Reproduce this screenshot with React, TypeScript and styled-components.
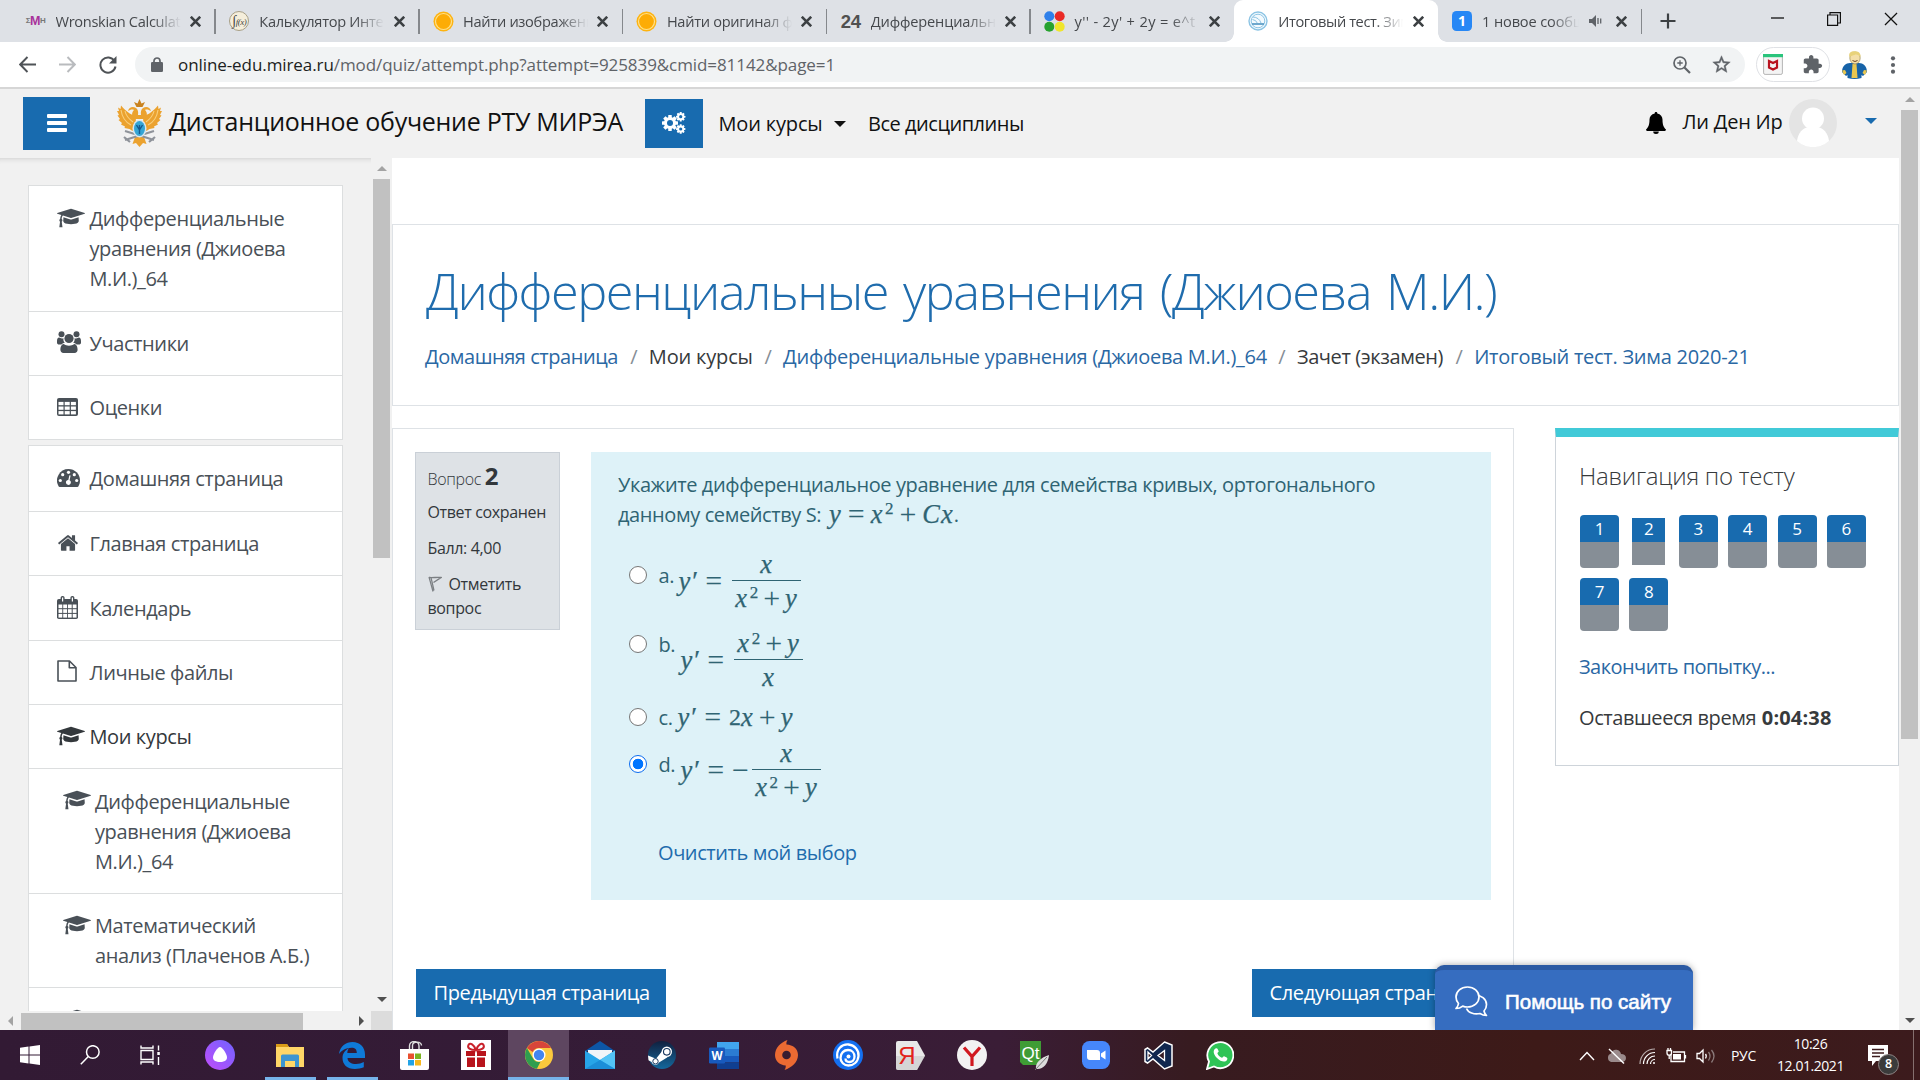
import React from "react";
import styled, { createGlobalStyle, css } from "styled-components";

const Global = createGlobalStyle`
  * { box-sizing: border-box; }
  html, body { margin: 0; padding: 0; overflow: hidden; }
  body { font-family: "Open Sans", "Noto Sans", sans-serif; color: #373a3c; background: #fff; }
  h1, h2, p { margin: 0; font-weight: 400; }
  svg { display: block; flex: none; }
`;

const Screen = styled.div`
  width: 1920px; height: 1080px; display: flex; flex-direction: column; overflow: hidden; position: relative;
`;

/* ---------- browser chrome ---------- */
const TabStrip = styled.div`
  height: 42px; background: #dee1e6; display: flex; padding-left: 11px; flex: none;
`;
const TabBox = styled.div<{ $active?: boolean; $line?: boolean }>`
  width: 203.8px; height: 42px; padding: 0 0 0 14px; display: flex; align-items: center; flex: none; position: relative;
  ${p => p.$line && css`&::after { content: ""; position: absolute; right: -1px; top: 9px; width: 1.5px; height: 25px; background: #85888c; }`}
  ${p => p.$active && css`
    background: #fff; border-radius: 9px 9px 0 0;
    &::before, &::after { content: ""; position: absolute; bottom: 0; width: 9px; height: 9px; }
    &::before { left: -9px; background: radial-gradient(circle at 0 0, transparent 8.5px, #fff 9px); }
    &::after { right: -9px; background: radial-gradient(circle at 100% 0, transparent 8.5px, #fff 9px); }
  `}
`;
const Favicon = styled.div`width: 21px; height: 21px; display: flex; align-items: center; justify-content: center;`;
const TabTitle = styled.div<{ $w: number; $ls?: number }>`
  width: ${p => p.$w}px; margin-left: 9.5px; font-size: 14.6px; letter-spacing: ${p => p.$ls ?? -0.3}px; line-height: 40px; white-space: nowrap; overflow: hidden; color: #45484c;
  mask-image: linear-gradient(90deg, #000 calc(100% - 28px), transparent);
`;
const TabClose = styled.div`margin-left: auto; margin-right: 14px; display: flex;`;
const Sound = styled.div`margin-left: 10px; display: flex;`;
const StripButton = styled.div`width: 40px; margin-left: 6.5px; display: flex; align-items: center; justify-content: center;`;
const WindowButtons = styled.div`margin-left: auto; display: flex; height: 37px; align-items: center; gap: 43px; padding-right: 22px;`;

const Toolbar = styled.div`
  height: 47px; background: #fff; border-bottom: 2px solid #d6d6d6; display: flex; align-items: center; padding: 0 21px 0 19px; flex: none;
`;
const NavIcons = styled.div`display: flex; gap: 23px; width: 116px;`;
const Omnibox = styled.div`
  width: 1610px; height: 35px; border-radius: 18px; background: #f1f3f4; display: flex; align-items: center; padding: 0 13px 0 16px;
`;
const Url = styled.div`
  font-size: 17px; letter-spacing: -0.08px; margin-left: 15px; color: #5f6368; white-space: nowrap; flex: 1; line-height: 34px;
  b { font-weight: 400; color: #1c1e21; }
`;
const OmniIcons = styled.div`display: flex; gap: 20px; align-items: center;`;
const ExtPill = styled.div`
  width: 74px; height: 35px; border: 1.5px solid #dfe1e5; border-radius: 18px; margin-left: 11px; display: flex; align-items: center; justify-content: space-between; padding: 0 6px;
`;

/* ---------- page frame ---------- */
const Page = styled.div`flex: 1; min-height: 0; display: flex; background: #fff;`;
const PageBody = styled.div`width: 1899px; display: flex; flex-direction: column; min-height: 0;`;
const Header = styled.header`
  height: 69px; background: #f1f1f1; display: flex; align-items: center; padding-left: 23px; flex: none; color: #111; font-size: 20px;
  padding-bottom: 1px;
`;
const MenuButton = styled.div`
  width: 67px; height: 53px; background: #186baf; display: flex; flex-direction: column; align-items: center; justify-content: center; gap: 3.4px; flex: none;
  i { display: block; width: 20px; height: 4px; border-radius: 1px; background: #fff; }
`;
const GearButton = styled.div`
  width: 58px; height: 49px; background: #186baf; display: flex; align-items: center; justify-content: center; margin-left: 22px; padding-right: 1px;
`;
const Brand = styled.div`display: flex; align-items: center; margin-left: 27px;`;
const BrandName = styled.div`font-size: 25px; letter-spacing: -0.28px; line-height: 34px; margin-left: 7px; width: 454px; white-space: nowrap; padding-bottom: 4px;`;
const HeaderLink = styled.div<{ $ml: number; $ls: number }>`
  margin-left: ${p => p.$ml}px; letter-spacing: ${p => p.$ls}px; line-height: 30px; white-space: nowrap; display: flex; align-items: center; padding-top: 1px;
`;
const Caret = styled.i<{ $c: string; $ml?: number }>`
  width: 0; height: 0; border: 6.5px solid transparent; border-top: 6.5px solid ${p => p.$c}; border-bottom: 0; margin-left: ${p => p.$ml ?? 0}px;
`;
const UserCaret = styled(Caret)`margin-bottom: 5px;`;
const UserMenu = styled.div`
  margin-left: auto; display: flex; align-items: center; padding-right: 22px;
`;
const UserName = styled.div`letter-spacing: -0.24px; margin: 0 6px 4px 17px; width: 100px; white-space: nowrap;`;
const Columns = styled.div`flex: 1; min-height: 0; display: flex;`;

/* ---------- scrollbars ---------- */
const VScroll = styled.div<{ $w: number }>`
  width: ${p => p.$w}px; background: #f1f1f1; display: flex; flex-direction: column; flex: none;
`;
const VThumb = styled.div<{ $h: number; $ml: number }>`
  width: 17px; margin-left: ${p => p.$ml}px; height: ${p => p.$h}px; background: #c1c1c1;
`;
const ArrowCell = styled.div<{ $w: number; $h: number }>`
  width: ${p => p.$w}px; height: ${p => p.$h}px; display: flex; align-items: center; justify-content: center; flex: none;
`;
const Push = styled.div`flex: 1;`;
const HScroll = styled.div`height: 19px; display: flex; flex: none; background: #f1f1f1;`;
const HThumb = styled.div`width: 282px; height: 17px; margin-top: 2px; background: #c1c1c1;`;
const Corner = styled.div`width: 21px; height: 19px; background: #dcdcdc;`;

const Arrow = ({ dir, color = "#505050" }: { dir: "up" | "down" | "left" | "right"; color?: string }) => {
  const d = { up: "M0 7L5 2L10 7Z", down: "M0 3L5 8L10 3Z", left: "M7 0L2 5L7 10Z", right: "M3 0L8 5L3 10Z" }[dir];
  return <svg width="10" height="10" viewBox="0 0 10 10"><path d={d} fill={color} /></svg>;
};

/* ---------- sidebar ---------- */
const Sidebar = styled.aside`width: 392px; display: flex; flex-direction: column; flex: none; background: #f1f1f1; box-shadow: inset 0 6px 5px -5px #cfcfcf;`;
const SidebarScroll = styled.div`flex: 1; min-height: 0; display: flex;`;
const SidebarList = styled.div`width: 371px; padding: 27px 28px 0; overflow: hidden; display: flex; flex-direction: column; gap: 5px;`;
const Card = styled.div`border: 1px solid #dcdedf; background: #fff; flex: none;`;
const Item = styled.div<{ $nested?: boolean; $dark?: boolean }>`
  padding: 17.2px 0 16.2px ${p => (p.$nested ? 33.5 : 28)}px; display: flex; color: ${p => (p.$dark ? "#33383c" : "#495057")};
  & + & { border-top: 1px solid #dcdedf; }
  &:first-child { padding-top: 18px; padding-bottom: 16.6px; }
`;
const ItemIcon = styled.div`width: 32.5px; height: 30px; padding-bottom: 3px; display: flex; align-items: center; flex: none;`;
const ItemText = styled.div`font-size: 20px; line-height: 30px; letter-spacing: -0.4px; white-space: pre;`;

/* ---------- main ---------- */
const Main = styled.main`width: 1507px; padding-top: 66px; display: flex; flex-direction: column; overflow: hidden;`;
const TitleCard = styled.section`height: 182px; border: 1px solid #dee2e6; padding: 36px 0 0 32px; flex: none;`;
const Title = styled.h1`font-size: 50.5px; line-height: 60px; font-weight: 300; color: #1f6cad; letter-spacing: -1.5px; word-spacing: 3.5px; margin-left: 1px; white-space: nowrap;`;
const Crumbs = styled.nav`margin-top: 21px; display: flex; font-size: 20px; line-height: 30px; white-space: nowrap; letter-spacing: -0.3px;`;
const Crumb = styled.span<{ $w: number; $link?: boolean; $ls?: number }>`
  width: ${p => p.$w}px; color: ${p => (p.$link ? "#2a68a4" : "#373a3c")}; letter-spacing: ${p => p.$ls ?? -0.3}px;
`;
const Slash = styled.span`width: 30.3px; text-align: center; color: #868e96;`;
const ContentRow = styled.div`display: flex; align-items: flex-start; margin-top: 22px; flex: 1; min-height: 0; justify-content: space-between;`;
const QuizCard = styled.section`width: 1122px; height: 700px; border: 1px solid #dee2e6; padding: 23px 22px;`;
const Question = styled.div`display: flex; align-items: flex-start; justify-content: space-between;`;
const Info = styled.div`
  width: 145px; height: 178px; background: #dee2e6; border: 1px solid #cad0d7; padding: 9px 0 0 11.5px; font-size: 16px; line-height: 24px; letter-spacing: -0.35px; color: #32373b;
`;
const InfoHead = styled.div`line-height: 30px; height: 38px; font-weight: 300; b { font-size: 24px; font-weight: 700; letter-spacing: 0; line-height: 28px; }`;
const InfoLine = styled.div`height: 36px; white-space: nowrap;`;
const FlagLine = styled.div`svg { display: inline-block; vertical-align: -2px; margin-right: 7px; }`;
const Formulation = styled.div`
  width: 900px; height: 448px; background: #def2f8; color: #2f6473; padding: 17.5px 0 0 27px; font-size: 20px; line-height: 30px; letter-spacing: -0.4px;
`;
const QText = styled.p`white-space: pre; height: 60px;`;
const Options = styled.div`margin: 35px 0 0 11px;`;
const Option = styled.label<{ $h: number }>`display: flex; align-items: flex-start; height: ${p => p.$h}px;`;
const Radio = styled.input.attrs({ type: "radio" })`
  appearance: none; width: 18px; height: 18px; margin: 1px 11.5px 0 0; border: 1.3px solid #767676; border-radius: 50%; background: #fff; flex: none;
  &:checked { border-color: #0b6cf0; background: radial-gradient(circle, #0075ff 5px, #fff 5.6px); }
`;
const Letter = styled.span<{ $w: number }>`line-height: 22px; width: ${p => p.$w}px;`;
const ClearLink = styled.div`margin: 17px 0 0 40px; color: #1f6cad; letter-spacing: -0.42px;`;

const MathBox = styled.span<{ $mt: number }>`
  display: flex; align-items: center; margin-top: ${p => p.$mt}px; font: 24px/28px "Liberation Serif", serif; letter-spacing: 0; -webkit-text-stroke: 0.25px #2f6473;
`;
const Sup = styled.sup`font-size: 17px; line-height: 0; vertical-align: 8.5px; margin-left: 1.5px;`;
const InlineMath = styled.span`font: 24px/20px "Liberation Serif", serif; letter-spacing: 0; margin-left: 3px; vertical-align: -1px; -webkit-text-stroke: 0.25px #2f6473;`;
const Variable = styled.i`font-size: 26.5px; line-height: 20px; margin-right: 1px;`;
const Prime = styled.span`font-size: 27px; line-height: 20px; margin-left: 1px;`;
const Op = styled.span<{ $l?: number; $r?: number }>`
  display: inline-block; font-size: 30px; line-height: 20px; vertical-align: -1px; margin: 0 ${p => p.$r ?? 5}px 0 ${p => p.$l ?? 5}px; -webkit-text-stroke: 0;
`;
const Frac = styled.span`display: flex; flex-direction: column; width: 69px; text-align: center; white-space: nowrap; margin-left: 1px;`;
const Num = styled.span`height: 31px; line-height: 28px; padding-top: 2px;`;
const Den = styled.span`height: 33px; border-top: 1.6px solid #2f6473; padding-top: 4px;`;

const Footer = styled.div`display: flex; justify-content: space-between; margin-top: 68.5px; padding-left: 1px;`;
const PageButton = styled.div<{ $w: number }>`
  width: ${p => p.$w}px; height: 48px; background: #186baf; color: #fff; font-size: 20px; line-height: 47px; padding-left: 17.5px; letter-spacing: -0.36px; white-space: nowrap; overflow: hidden;
`;

const QuizNav = styled.aside`width: 344px; height: 338px; border: 1px solid #ced4da; border-top: 9px solid #41cad8; padding: 23px 23px 0; color: #373a3c; font-size: 20px; line-height: 30px;`;
const NavTitle = styled.h2`font-size: 24px; font-weight: 300; line-height: 32px; letter-spacing: -0.26px; white-space: nowrap;`;
const NavGrid = styled.div`display: grid; grid-template-columns: repeat(6, 39px); column-gap: 10.4px; row-gap: 10px; margin: 23px 0 0 1px;`;
const NavCell = styled.div<{ $current?: boolean }>`
  height: 53px; border-radius: 4px; font-size: 17px; line-height: 27px; text-align: center; color: #fff;
  background: linear-gradient(#186baf 27px, #868e96 27px);
  ${p => p.$current && css`border: 3px solid #fff; line-height: 21px; background: linear-gradient(#186baf 24px, #868e96 24px); border-radius: 0;`}
`;
const NavLine = styled.div<{ $c?: string; $ls: number }>`margin-top: 20.8px; color: ${p => p.$c ?? "inherit"}; letter-spacing: ${p => p.$ls}px; white-space: nowrap; b { letter-spacing: 0.15px; margin-left: 1px; }`;

const HelpTab = styled.div`
  position: absolute; left: 1435px; top: 965px; width: 258px; height: 65px; background: #366dc0; border-top: 5px solid #2c5aa3; border-radius: 9px 9px 0 0;
  box-shadow: 0 0 7px rgba(0, 0, 0, 0.35); color: #fff; display: flex; align-items: center; padding: 3px 0 0 20px; gap: 17px; clip-path: inset(-10px -10px 0 -10px);
  font: 400 20.5px "Liberation Sans", Arial, sans-serif; letter-spacing: 0; -webkit-text-stroke: 0.6px #fff; white-space: nowrap;
`;

/* ---------- taskbar ---------- */
const Taskbar = styled.footer`
  height: 50px; background: linear-gradient(90deg, #321a34 0%, #351c37 35%, #3a1d36 52%, #371b20 62%, #3d1a18 80%, #3c1b1d 100%); display: flex; color: #fff; flex: none;
`;
const Cell = styled.div<{ $w: number; $line?: boolean }>`
  width: ${p => p.$w}px; height: 50px; display: flex; align-items: center; justify-content: center; flex: none;
  ${p => p.$line && css`box-shadow: inset 0 -3px #76b3ea;`}
`;
const AppCell = styled(Cell).attrs({ $w: 50.5 })`margin-right: 11.5px;`;
const ActiveCell = styled(Cell)`background: #5e4660; margin: 0 5.5px 0 -4.7px;`;
const Tray = styled.div`margin-left: auto; display: flex; align-items: center; padding-right: 6px;`;
const TrayIcon = styled.div<{ $w: number }>`width: ${p => p.$w}px; display: flex; justify-content: center; padding-top: 2px;`;
const Lang = styled.div`width: 46px; text-align: center; font-size: 14px; letter-spacing: -0.3px; padding-top: 1px;`;
const Clock = styled.div`width: 88px; text-align: center; font-size: 14px; line-height: 22.5px; letter-spacing: -0.45px;`;
const Notes = styled.div`width: 50px; height: 50px; position: relative; display: flex; align-items: center; padding-left: 4px; margin-left: 9.5px; border-right: 1px solid #85706f;`;
const Badge = styled.span`
  position: absolute; left: 14px; top: 24px; width: 21px; height: 21px; border-radius: 50%; background: #3b3b3b; border: 1.5px solid #8e8585; font-size: 12.5px; font-weight: 600; line-height: 18px; text-align: center;
`;

/* ---------- icons ---------- */
const Cross = ({ s = 10, c = "#3c4043", w = 2.4 }) => (
  <svg width={s} height={s} viewBox="0 0 10 10"><path d="M.7.7L9.3 9.3M9.3.7L.7 9.3" stroke={c} strokeWidth={w} /></svg>
);
const Cap = () => (
  <svg width="28" height="22" viewBox="0 0 2304 1792" fill="currentColor"><path d="M1774 836l18 316q4 69-82 128t-235 93.5-323 34.5-323-34.5-235-93.5-82-128l18-316 574 181q22 7 48 7t48-7zm530-324q0 23-22 31l-1120 352q-4 1-10 1t-10-1l-652-206q-43 34-71 111.5t-34 178.5q63 36 63 109 0 69-58 107l58 433q2 14-8 25-9 11-24 11h-192q-15 0-24-11-10-11-8-25l58-433q-58-38-58-107 0-73 65-111 11-207 98-330l-333-104q-22-8-22-31t22-31l1120-352q4-1 10-1t10 1l1120 352q22 8 22 31z" /></svg>
);
const Users = () => (
  <svg width="24" height="22" viewBox="0 0 24 22" fill="currentColor">
    <circle cx="4.5" cy="3.2" r="3" /><circle cx="19.5" cy="3.2" r="3" /><circle cx="12" cy="7.5" r="4.6" />
    <path d="M0 10c0-2 .8-3.4 2.1-3.4 1 .7 2.7 1.1 4.4.6-.4 2 .2 3.6 1.3 4.900-1.300-.1-2.500.5-3.300 1.400H2.200C.9 13.500 0 12.800 0 11.700z" />
    <path d="M24 10c0-2-.8-3.400-2.100-3.400-1 .7-2.700 1.100-4.400.6.4 2-.2 3.600-1.300 4.900 1.300-.1 2.500.5 3.300 1.400h2.300c1.300 0 2.200-.7 2.200-1.800z" />
    <path d="M6.800 13c1.400 1.200 3.100 1.700 5.200 1.700s3.800-.5 5.200-1.700c2.400.1 3.400 3 3.400 5.800 0 2-1.200 3.200-3.100 3.200h-11c-1.900 0-3.100-1.200-3.100-3.200 0-2.800 1-5.700 3.400-5.800z" />
  </svg>
);
const Table = () => (
  <svg width="21" height="18" viewBox="0 0 21 18"><rect width="21" height="18" rx="2" fill="currentColor" />
    {[3.9, 8.5, 13.1].map(y => [1.5, 7.7, 13.9].map(x => <rect key={`${x}${y}`} x={x} y={y} width="5" height="3.3" fill="#fff" />))}
  </svg>
);
const Gauge = () => (
  <svg width="23" height="18" viewBox="0 0 23 18"><path d="M11.500 0A11.500 11.500 0 0 1 23 11.500c0 2.200-.6 4.200-1.700 6-.2.300-.5.500-.9.500H2.600c-.4 0-.7-.2-.9-.5A11.500 11.500 0 0 1 11.500 0z" fill="currentColor" />
    <g fill="#fff"><circle cx="11.5" cy="3.3" r="1.6" /><circle cx="5.7" cy="5.7" r="1.6" /><circle cx="17.3" cy="5.7" r="1.6" /><circle cx="3.3" cy="11.5" r="1.6" /><circle cx="19.7" cy="11.5" r="1.6" /><path d="M12.400 6.200l1.200.3-1 4.700a2.500 2.500 0 1 1-1.300-.3z" /></g>
  </svg>
);
const House = () => (
  <svg width="22" height="22" viewBox="0 0 1792 1792" fill="currentColor"><path d="M1472 992v480q0 26-19 45t-45 19h-384v-384h-256v384h-384q-26 0-45-19t-19-45v-480q0-1 .5-3t.5-3l575-474 575 474q1 2 1 6zm223-69l-62 74q-8 9-21 11h-3q-13 0-21-7l-692-577-692 577q-12 8-24 7-13-2-21-11l-62-74q-8-10-7-23.500t11-21.500l719-599q32-26 76-26t76 26l244 204v-195q0-14 9-23t23-9h192q14 0 23 9t9 23v408l219 182q10 8 11 21.500t-7 23.500z" /></svg>
);
const Calendar = () => (
  <svg width="21" height="23" viewBox="0 0 21 23"><rect y="3" width="21" height="20" rx="1.8" fill="currentColor" />
    <rect x="3.6" y="0" width="4" height="7" rx="1.8" fill="currentColor" /><rect x="13.4" y="0" width="4" height="7" rx="1.8" fill="currentColor" />
    <rect x="5" y="1.5" width="1.2" height="4" fill="#fff" /><rect x="14.8" y="1.5" width="1.2" height="4" fill="#fff" />
    {[8.5, 13.2, 17.9].map(y => [1.5, 6.2, 10.9, 15.7].map(x => <rect key={`${x}${y}`} x={x} y={y} width="3.8" height="3.7" fill="#fff" />))}
  </svg>
);
const FileIcon = () => (
  <svg width="20" height="22" viewBox="0 0 20 22" fill="none" stroke="currentColor" strokeWidth="1.6"><path d="M1 1h11.500L19 7.500V21H1zM12.300 1v6.700H19" strokeLinejoin="round" /></svg>
);
const Gears = () => {
  const gear = (cx: number, cy: number, r: number, n: number, hole: number) => (
    <g>
      {Array.from({ length: n }, (_, i) => <rect key={i} x={cx - r * 0.22} y={cy - r} width={r * 0.44} height={r * 2} rx="0.5" fill="#fff" transform={`rotate(${(i * 180) / n} ${cx} ${cy})`} />)}
      <circle cx={cx} cy={cy} r={r * 0.76} fill="#fff" /><circle cx={cx} cy={cy} r={hole} fill="#186baf" />
    </g>
  );
  return <svg width="24" height="22" viewBox="0 0 24 22">{gear(8, 11, 8, 4, 3)}{gear(18.7, 4.7, 4.7, 4, 1.6)}{gear(18.7, 17, 4.7, 4, 1.6)}</svg>;
};
const Bell = () => (
  <svg width="20" height="22" viewBox="0 0 20 22"><path d="M10 0c.8 0 1.300.5 1.300 1.400 3.300.6 5.200 3.200 5.200 6.200 0 5.500 1.200 7.900 3.500 9.900 0 .9-.7 1.500-1.500 1.500h-17C.7 19 0 18.400 0 17.500c2.300-2 3.500-4.400 3.500-9.900 0-3 1.900-5.600 5.200-6.200C8.700.5 9.200 0 10 0zM7.200 19.500h5.600a2.800 2.500 0 0 1-5.600 0z" fill="#000" /></svg>
);
const Emblem = () => (
  <svg width="45" height="48" viewBox="0 0 45 48">
    <g fill="#eba22f">
      <path d="M19 17C13 16 8 11 4 6.500L3.500 10 1 8.500 2 12 0 12l2 4-1.500.5L3 20l-1.500 1L5 24l-1 1.500 4 2-.5 1.500 5 1 3 2 3-3z" />
      <path d="M26 17c6-1 11-6 15-10.500l.5 3.500L44 8.500 43 12h2l-2 4 1.500.5L42 20l1.500 1L40 24l1 1.500-4 2 .5 1.500-5 1-3 2-3-3z" />
      <path d="M17 20c-3-4-2-7 0-9-2-1-4 0-6 1 1-4 5-5 8-3 2 1.500 2.500 4 2 7h3c-.5-3 0-5.500 2-7 3-2 7-1 8 3-2-1-4-2-6-1 2 2 3 5 0 9z" />
      <path d="M17 3l2.500 5h6L28 3l-3.500 1.500L22.500 0l-2 4.500z" fill="#c9821f" />
      <path d="M18 38h9l2.500 7-3.500-1-3.500 4-3.500-4-3.500 1z" />
    </g>
    <g stroke="#f9cf7c" strokeWidth="1.1" fill="none"><path d="M4 11c1 7 4 12 10 15M8 12c1 5 4 8 8 11M41 11c-1 7-4 12-10 15M37 12c-1 5-4 8-8 11" /></g>
    <path d="M8 41l29-9M37 41L8 32M7 38l6 5M38 38l-6 5" stroke="#8f939a" strokeWidth="2.2" />
    <ellipse cx="22.5" cy="29.5" rx="7" ry="9" fill="#d9e6ee" /><ellipse cx="22.5" cy="29.5" rx="5.5" ry="7.5" fill="#35a5d5" />
    <path d="M19.500 26l3 5 3-5M22.500 26v9" stroke="#14588f" strokeWidth="1.4" fill="none" />
  </svg>
);
const Avatar = () => (
  <svg width="48" height="48" viewBox="0 0 48 48"><circle cx="24" cy="24" r="24" fill="#e4e4e4" /><circle cx="24" cy="19.5" r="11" fill="#fff" /><path d="M8 42c1-8 6-13.500 11-13.500h10c5 0 10 5.500 11 13.500a24 24 0 0 1-32 0z" fill="#fff" /></svg>
);
const PipBoy = () => (
  <svg width="25" height="28" viewBox="0 0 25 28"><path d="M0 21c0-6 4-9 8-9h9c4 0 8 3 8 9l-4 4-1.500-1v3q-7 2-14 0v-3L4 25z" fill="#1763a8" /><path d="M10.500 13h4l1 14h-6z" fill="#e9c64f" /><ellipse cx="13" cy="7" rx="5.200" ry="6" fill="#f4dfa8" stroke="#8d7c46" strokeWidth=".6" /><path d="M7.500 6C6 1 10 0 13 .3 17 0 19 3 18.500 6c-2-2-4-3-6-2-2 0-3 1-5 2z" fill="#e8d27a" /><path d="M10.500 9.500q2.500 2 5 0" stroke="#6d4420" fill="none" /><path d="M0 19.500l3-.5 1.500 3L2 24zM25 19.500l-3-.5-1.500 3L23 24z" fill="#e9c64f" /></svg>
);

const Yellow = () => <svg width="21" height="21" viewBox="0 0 21 21"><circle cx="10.5" cy="10.5" r="10" fill="#fdb310" /><circle cx="10.5" cy="10.5" r="8" fill="#fdac05" stroke="#ffe08a" strokeWidth="1.2" /></svg>;
const Tag24 = styled.b`font: 700 18.5px/21px "Liberation Sans", sans-serif; color: #505050; letter-spacing: -0.3px;`;
const MathMark = styled.span`font: 700 12.5px/20px "Liberation Sans", sans-serif; color: #a8329b; letter-spacing: -0.5px; display: flex; i { font-style: normal; font-size: 8px; color: #777; }`;
const IntMark = styled.span`width: 20px; height: 20px; border-radius: 50%; border: 1px solid #a79f86; background: #f5eedb; font: italic 400 9px/17px "Liberation Serif", serif; color: #444; text-align: center; letter-spacing: -0.5px; b { font-size: 14px; font-weight: 400; }`;
const OneMark = styled.span`width: 20px; height: 20px; border-radius: 4.5px; background: #2787f5; color: #fff; font: 700 14px/20px "Open Sans", sans-serif; text-align: center;`;

const tabs: { title: string; icon: React.ReactNode; active?: boolean; line?: boolean; sound?: boolean; ls?: number }[] = [
  { title: "Wronskian Calculator", line: true, icon: <MathMark><i>Σ</i>M<i>H</i></MathMark> },
  { title: "Калькулятор Интегралов", line: true, icon: <IntMark><b>∫</b>f(x)</IntMark> },
  { title: "Найти изображение", line: true, icon: <Yellow /> },
  { title: "Найти оригинал функции", line: true, icon: <Yellow /> },
  { title: "Дифференциальные", line: true, icon: <Tag24>24</Tag24>, ls: -0.15 },
  { title: "y'' - 2y' + 2y = e^t", ls: 0.35, icon: <svg width="21" height="21" viewBox="0 0 21 21"><circle cx="5.3" cy="5.3" r="5" fill="#2f80ea" /><circle cx="15.7" cy="5.3" r="5" fill="#ea2a26" /><circle cx="5.3" cy="15.7" r="5" fill="#27a22f" /><circle cx="15.7" cy="15.7" r="5" fill="#f0e52c" /></svg> },
  { title: "Итоговый тест. Зима", active: true, ls: -0.4, icon: <svg width="20" height="20" viewBox="0 0 20 20" fill="none" stroke="#8cc4e4"><circle cx="10" cy="10" r="9" strokeWidth="1.4" fill="#f3fafe" /><circle cx="10" cy="10" r="6.8" /><path d="M5 6a9 9 0 0 1 8 6M4.500 8.500a6 6 0 0 1 5 4" /><path d="M4 13h12" strokeWidth="1.8" stroke="#5f9fc8" /></svg> },
  { title: "1 новое сообщение", line: true, sound: true, ls: -0.15, icon: <OneMark>1</OneMark> },
];

const XSquared = () => <><Variable>x</Variable><Sup>2</Sup></>;
const YPrime = ({ gap = 9 }: { gap?: number }) => <><Variable>y</Variable><Prime>′</Prime><Op $l={7} $r={gap}>=</Op></>;
const XPlusY = () => <><XSquared /><Op>+</Op><Variable>y</Variable></>;

export default function App() {
  return (
    <Screen>
      <Global />
      <TabStrip>
        {tabs.map(t => (
          <TabBox key={t.title} $active={t.active} $line={t.line}>
            <Favicon>{t.icon}</Favicon>
            <TabTitle $w={t.sound ? 97 : 125} $ls={t.ls}>{t.title}</TabTitle>
            {t.sound && <Sound><svg width="13" height="12" viewBox="0 0 13 12"><path d="M0 4h3l4-4v12L3 8H0z" fill="#5f6368" /><path d="M9 3v6M11.700 3.500v5" stroke="#5f6368" strokeWidth="1.3" /></svg></Sound>}
            <TabClose><Cross s={11} /></TabClose>
          </TabBox>
        ))}
        <StripButton><svg width="16" height="16" viewBox="0 0 16 16"><path d="M8 .500v15M.500 8h15" stroke="#3c4043" strokeWidth="2.2" /></svg></StripButton>
        <WindowButtons>
          <svg width="13" height="13" viewBox="0 0 13 13"><path d="M0 6h13" stroke="#111" strokeWidth="1.3" /></svg>
          <svg width="14" height="14" viewBox="0 0 14 14" fill="none" stroke="#111" strokeWidth="1.2"><path d="M.600 3h10v10.400h-10zM3 3V.600h10.400V11H11" /></svg>
          <Cross s={14} c="#111" w={0.9} />
        </WindowButtons>
      </TabStrip>
      <Toolbar>
        <NavIcons>
          <svg width="17" height="17" viewBox="0 0 17 17" fill="none" stroke="#4f5357" strokeWidth="1.9"><path d="M17 8.500H1.500M8.500 1L1.200 8.500l7.300 7.500" /></svg>
          <svg width="17" height="17" viewBox="0 0 17 17" fill="none" stroke="#b9bbbe" strokeWidth="1.9"><path d="M0 8.500h15.500M8.500 1l7.300 7.500-7.300 7.500" /></svg>
          <svg width="18" height="18" viewBox="0 0 18 18"><path d="M15.500 5A7.600 7.600 0 1 0 16.500 10.500" fill="none" stroke="#4f5357" strokeWidth="2" /><path d="M17.500 0v7.500H10z" fill="#4f5357" /></svg>
        </NavIcons>
        <Omnibox>
          <svg width="12" height="15" viewBox="0 0 12 15"><rect y="5" width="12" height="10" rx="1.3" fill="#5f6368" /><path d="M3 6V4a3 3 0 0 1 6 0v2" fill="none" stroke="#5f6368" strokeWidth="1.7" /></svg>
          <Url><b>online-edu.mirea.ru</b>/mod/quiz/attempt.php?attempt=925839&amp;cmid=81142&amp;page=1</Url>
          <OmniIcons>
            <svg width="18" height="18" viewBox="0 0 18 18" fill="none" stroke="#5f6368" strokeWidth="1.7"><circle cx="7" cy="7" r="6" /><path d="M11.500 11.500L17 17" strokeWidth="2.2" /><path d="M4.300 7h5.400M7 4.300v5.400" strokeWidth="1.3" /></svg>
            <svg width="21" height="21" viewBox="0 0 24 24" fill="#5f6368"><path d="M22 9.240l-7.190-.62L12 2 9.190 8.630 2 9.240l5.460 4.730L5.820 21 12 17.270 18.180 21l-1.630-7.030L22 9.240zM12 15.400l-3.760 2.270 1-4.280-3.320-2.880 4.380-.38L12 6.100l1.710 4.040 4.380.38-3.320 2.880 1 4.280L12 15.400z" stroke="#5f6368" strokeWidth=".5" /></svg>
          </OmniIcons>
        </Omnibox>
        <ExtPill>
          <svg width="20" height="21" viewBox="0 0 20 21"><rect x=".6" y=".6" width="18.8" height="19.8" rx="1.5" fill="#f4f4f4" stroke="#b5b5b5" /><rect width="20" height="3.2" fill="#2ac47c" /><path d="M6 7L10 9l4-2v6.500L10 15.500l-4-2z" fill="none" stroke="#b9131f" strokeWidth="2.2" /></svg>
          <svg width="21" height="21" viewBox="0 0 24 24" fill="#5f6368"><path d="M20.500 11H19V7c0-1.100-.9-2-2-2h-4V3.500C13 2.120 11.880 1 10.500 1S8 2.120 8 3.500V5H4c-1.100 0-1.990.9-1.990 2v3.800H3.500c1.490 0 2.700 1.210 2.700 2.700s-1.210 2.700-2.700 2.700H2V20c0 1.100.9 2 2 2h3.800v-1.500c0-1.490 1.210-2.700 2.700-2.700 1.490 0 2.700 1.210 2.700 2.700V22H17c1.100 0 2-.9 2-2v-4h1.500c1.380 0 2.500-1.120 2.500-2.500S21.880 11 20.500 11z" /></svg>
        </ExtPill>
        <Push /><PipBoy /><Push />
        <svg width="20" height="18" viewBox="0 0 20 18" fill="#5f6368"><circle cx="14" cy="2.3" r="2.1" /><circle cx="14" cy="9" r="2.1" /><circle cx="14" cy="15.7" r="2.1" /></svg>
      </Toolbar>

      <Page>
        <PageBody>
          <Header>
            <MenuButton><i /><i /><i /></MenuButton>
            <Brand><Emblem /><BrandName>Дистанционное обучение РТУ МИРЭА</BrandName></Brand>
            <GearButton><Gears /></GearButton>
            <HeaderLink $ml={15.5} $ls={-0.16}>Мои курсы<Caret $c="#111" $ml={11} /></HeaderLink>
            <HeaderLink $ml={22.5} $ls={-0.48}>Все дисциплины</HeaderLink>
            <UserMenu><Bell /><UserName>Ли Ден Ир</UserName><Avatar /><UserCaret $c="#186baf" $ml={28.5} /></UserMenu>
          </Header>
          <Columns>
            <Sidebar>
              <SidebarScroll>
                <SidebarList>
                  <Card>
                    <Item><ItemIcon><Cap /></ItemIcon><ItemText>{"Дифференциальные\nуравнения (Джиоева\nМ.И.)_64"}</ItemText></Item>
                    <Item><ItemIcon><Users /></ItemIcon><ItemText>Участники</ItemText></Item>
                    <Item><ItemIcon><Table /></ItemIcon><ItemText>Оценки</ItemText></Item>
                  </Card>
                  <Card>
                    <Item><ItemIcon><Gauge /></ItemIcon><ItemText>Домашняя страница</ItemText></Item>
                    <Item><ItemIcon><House /></ItemIcon><ItemText>Главная страница</ItemText></Item>
                    <Item><ItemIcon><Calendar /></ItemIcon><ItemText>Календарь</ItemText></Item>
                    <Item><ItemIcon><FileIcon /></ItemIcon><ItemText>Личные файлы</ItemText></Item>
                    <Item $dark><ItemIcon><Cap /></ItemIcon><ItemText>Мои курсы</ItemText></Item>
                    <Item $nested><ItemIcon><Cap /></ItemIcon><ItemText>{"Дифференциальные\nуравнения (Джиоева\nМ.И.)_64"}</ItemText></Item>
                    <Item $nested><ItemIcon><Cap /></ItemIcon><ItemText>{"Математический\nанализ (Плаченов А.Б.)"}</ItemText></Item>
                    <Item $nested><ItemIcon><Cap /></ItemIcon></Item>
                  </Card>
                </SidebarList>
                <VScroll $w={21}>
                  <ArrowCell $w={21} $h={21}><Arrow dir="up" color="#a3a3a3" /></ArrowCell>
                  <VThumb $h={379} $ml={2} />
                  <Push />
                  <ArrowCell $w={21} $h={24}><Arrow dir="down" /></ArrowCell>
                </VScroll>
              </SidebarScroll>
              <HScroll>
                <ArrowCell $w={21} $h={20}><Arrow dir="left" color="#a3a3a3" /></ArrowCell>
                <HThumb />
                <Push />
                <ArrowCell $w={21} $h={20}><Arrow dir="right" /></ArrowCell>
                <Corner />
              </HScroll>
            </Sidebar>

            <Main>
              <TitleCard>
                <Title>Дифференциальные уравнения (Джиоева М.И.)</Title>
                <Crumbs>
                  <Crumb $w={193.5} $link $ls={-0.45}>Домашняя страница</Crumb><Slash>/</Slash>
                  <Crumb $w={104} $ls={-0.16}>Мои курсы</Crumb><Slash>/</Slash>
                  <Crumb $w={483.5} $link $ls={-0.28}>Дифференциальные уравнения (Джиоева М.И.)_64</Crumb><Slash>/</Slash>
                  <Crumb $w={147} $ls={-0.4}>Зачет (экзамен)</Crumb><Slash>/</Slash>
                  <Crumb $w={276} $link $ls={-0.26}>Итоговый тест. Зима 2020-21</Crumb>
                </Crumbs>
              </TitleCard>
              <ContentRow>
                <QuizCard>
                  <Question>
                    <Info>
                      <InfoHead>Вопрос <b>2</b></InfoHead>
                      <InfoLine>Ответ сохранен</InfoLine>
                      <InfoLine>Балл: 4,00</InfoLine>
                      <FlagLine><svg width="14" height="16" viewBox="0 0 14 16" fill="none" stroke="#7b7f83"><path d="M1 1l4 14.500M3 1.500l3 13" strokeWidth="1.2" /><path d="M1 1.500c4 .5 8-.5 12 0L5.500 6.500" strokeWidth="1.4" /></svg>Отметить<br />вопрос</FlagLine>
                    </Info>
                    <Formulation>
                      <QText>{"Укажите дифференциальное уравнение для семейства кривых, ортогонального\nданному семейству S: "}<InlineMath><Variable>y</Variable><Op $l={6} $r={6}>=</Op><XSquared /><Op $l={6} $r={6}>+</Op><Variable>C</Variable><Variable>x</Variable></InlineMath>.</QText>
                      <Options>
                        <Option $h={69}><Radio name="answer" /><Letter $w={20}>a.</Letter>
                          <MathBox $mt={-16}><YPrime /><Frac><Num><Variable>x</Variable></Num><Den><XPlusY /></Den></Frac></MathBox></Option>
                        <Option $h={73}><Radio name="answer" /><Letter $w={22}>b.</Letter>
                          <MathBox $mt={-5.5}><YPrime /><Frac><Num><XPlusY /></Num><Den><Variable>x</Variable></Den></Frac></MathBox></Option>
                        <Option $h={47}><Radio name="answer" /><Letter $w={19}>c.</Letter>
                          <MathBox $mt={-3.5}><YPrime gap={8} /><span>2</span><Variable>x</Variable><Op>+</Op><Variable>y</Variable></MathBox></Option>
                        <Option $h={67}><Radio name="answer" defaultChecked /><Letter $w={22}>d.</Letter>
                          <MathBox $mt={-15.5}><YPrime gap={8} /><Op $l={0} $r={2}>−</Op><Frac><Num><Variable>x</Variable></Num><Den><XPlusY /></Den></Frac></MathBox></Option>
                      </Options>
                      <ClearLink>Очистить мой выбор</ClearLink>
                    </Formulation>
                  </Question>
                  <Footer>
                    <PageButton $w={250}>Предыдущая страница</PageButton>
                    <PageButton $w={239}>Следующая страница</PageButton>
                  </Footer>
                </QuizCard>
                <QuizNav>
                  <NavTitle>Навигация по тесту</NavTitle>
                  <NavGrid>{[1, 2, 3, 4, 5, 6, 7, 8].map(n => <NavCell key={n} $current={n === 2}>{n}</NavCell>)}</NavGrid>
                  <NavLine $c="#2a68a4" $ls={-0.54}>Закончить попытку...</NavLine>
                  <NavLine $ls={-0.43}>Оставшееся время <b>0:04:38</b></NavLine>
                </QuizNav>
              </ContentRow>
            </Main>
          </Columns>
        </PageBody>
        <VScroll $w={21}>
          <ArrowCell $w={21} $h={21}><Arrow dir="up" color="#a3a3a3" /></ArrowCell>
          <VThumb $h={629} $ml={2} />
          <Push />
          <ArrowCell $w={21} $h={20}><Arrow dir="down" /></ArrowCell>
        </VScroll>
      </Page>

      <HelpTab>
        <svg width="33" height="31" viewBox="0 0 33 31" fill="#366dc0" stroke="#fff" strokeWidth="1.7" strokeLinejoin="round"><path d="M20 9c6 0 11.500 4 11.500 9.500 0 3-1 5-2.500 6.500.3 2 1.500 3.500 2.500 4.500-3 0-5-1-6.500-2-6 1.500-12-1-13.500-5" /><path d="M12.500 1C19 1 24 5.300 24 11s-5 10-11.500 10c-1.800 0-3.300-.3-4.800-.9C6 21.500 3.800 22.500 1 22.500c1.300-1.400 2.300-3 2.500-5C2 15.800 1 13.500 1 11 1 5.300 6 1 12.500 1z" /></svg>
        Помощь по сайту
      </HelpTab>

      <Taskbar>
        <Cell $w={60}><svg width="20" height="20" viewBox="0 0 20 20" fill="#fff"><path d="M0 2.800L8.500 1.600v7.900H0zM9.500 1.450L20 0v9.500H9.500zM0 10.500h8.500v7.900L0 17.200zM9.500 10.500H20V20L9.500 18.550z" /></svg></Cell>
        <Cell $w={60}><svg width="20" height="20" viewBox="0 0 20 20" fill="none" stroke="#fff" strokeWidth="1.5"><circle cx="12.8" cy="7" r="6.3" /><path d="M8.300 11.500L.800 19.300" /></svg></Cell>
        <Cell $w={60}><svg width="21" height="20" viewBox="0 0 21 20" fill="none" stroke="#fff" strokeWidth="1.4"><path d="M1 5.500h12v9H1zM1 .500v2.500h12V.500M1 19.500V17h12v2.500M18.500.500v5M18.500 12v8" /><rect x="17.3" y="7" width="2.5" height="3" fill="#fff" stroke="none" /></svg></Cell>
        <Cell $w={80}><svg width="30" height="30" viewBox="0 0 30 30"><defs><linearGradient id="alice" x1="1" y1="0" x2="0" y2="1"><stop offset="0" stopColor="#6f63ff" /><stop offset="1" stopColor="#c14dfb" /></linearGradient></defs><circle cx="15" cy="15" r="15" fill="url(#alice)" /><path d="M15 7c2.500 0 7 7 7 10.500 0 3-3 4.500-7 4.500s-7-1.500-7-4.500C8 14 12.500 7 15 7z" fill="#fff" /></svg></Cell>
        <Cell $w={5} />
        <AppCell $line><svg width="28" height="24" viewBox="0 0 28 24"><path d="M0 1h11l2 3h15v20H0z" fill="#ffd667" /><path d="M0 1h11l2 3H0z" fill="#d99b17" /><path d="M5 13q0-1.500 1.500-1.500h15q1.500 0 1.500 1.500v11h-4v-6h-10v6H5z" fill="#3d95d0" /></svg></AppCell>
        <AppCell $line><svg width="26" height="27" viewBox="0 0 26 27"><path d="M0 12C1 4 7 0 13.500 0 21 0 26 5 26 12.500V16H8.500c.2 4 4 6 8.500 6 3 0 5.500-.8 7.800-2v5.300C22 26.600 19 27 16 27 8 27 3.500 22.500 3.500 16c0-4.500 2.500-8 6.500-9.800C8.800 7.600 8.400 9.300 8.300 11h9.500c0-3.500-1.600-5.300-5.300-5.300C7 5.700 2.500 8.500 0 12z" fill="#0f7ad8" /></svg></AppCell>
        <AppCell><svg width="29" height="29" viewBox="0 0 29 29"><path d="M9.500 9V5c0-6 9.500-6 9.500 0v4M12.500 8V4.500c0-5 9-4 9 0" fill="none" stroke="#ddd" strokeWidth="1.4" /><path d="M0 8h29v19q0 2-2 2H2q-2 0-2-2z" fill="#fff" /><path d="M8 12.500h6v5.500H8z" fill="#e8502f" /><path d="M15 12.500h6v5.500h-6z" fill="#7bb321" /><path d="M8 19h6v5.500H8z" fill="#23a3e6" /><path d="M15 19h6v5.500h-6z" fill="#f7b71b" /></svg></AppCell>
        <AppCell><svg width="30" height="30" viewBox="0 0 30 30"><rect width="30" height="30" fill="#fff" /><path d="M5 11h9v5H5zM16 11h9v5h-9zM6 17.500h8V27H6zM16 17.500h8V27h-8z" fill="#b8141c" /><path d="M15 10C9 10 6 8 7.500 5S13 4.500 15 10c2-5.500 6-8 7.500-5S21 10 15 10z" fill="none" stroke="#c9222b" strokeWidth="2" /></svg></AppCell>
        <ActiveCell $w={61} $line><svg width="28" height="28" viewBox="0 0 28 28"><circle cx="14" cy="14" r="14" fill="#fbc93d" /><path d="M1.900 7A14 14 0 0 1 26.100 7H14a7 7 0 0 0-6.300 4z" fill="#d8453a" /><path d="M1.900 7l6.100 10.500A7 7 0 0 0 15.500 20.800L11.900 27.800A14 14 0 0 1 1.900 7z" fill="#2f9e4f" /><circle cx="14" cy="14" r="6.5" fill="#fff" /><circle cx="14" cy="14" r="5.2" fill="#4285ef" /></svg></ActiveCell>
        <AppCell><svg width="30" height="28" viewBox="0 0 30 28"><path d="M0 10L15 0l15 10z" fill="#0d56a6" /><path d="M3 9h24v12H3z" fill="#f2f5f8" /><path d="M0 9.500L15 19 30 9.500V28H0z" fill="#27a5e8" /><path d="M30 9.500V28L15 19z" fill="#53c3f5" /><path d="M0 28l15-9 15 9z" fill="#1b8ed8" /></svg></AppCell>
        <AppCell><svg width="28" height="28" viewBox="0 0 28 28"><defs><linearGradient id="steam" x1="0" y1="0" x2="0" y2="1"><stop offset="0" stopColor="#11203f" /><stop offset="1" stopColor="#14689c" /></linearGradient></defs><circle cx="14" cy="14" r="14" fill="url(#steam)" /><path d="M0 14.500l8 3.200 6-7.500 5.500 6L11 21.500A4 4 0 0 1 3.500 21L.5 19.300z" fill="#fff" /><circle cx="18.8" cy="10.8" r="5.2" fill="#fff" /><circle cx="18.8" cy="10.8" r="3.3" fill="none" stroke="#17375f" strokeWidth="1.1" /><circle cx="7.5" cy="20.3" r="2.7" fill="none" stroke="#17375f" /></svg></AppCell>
        <AppCell><svg width="30" height="27" viewBox="0 0 30 27"><path d="M8 0h22v7H8z" fill="#41a5ee" /><path d="M8 7h22v7H8z" fill="#2b7cd3" /><path d="M8 14h22v6.500H8z" fill="#185abd" /><path d="M8 20.500h22V27H8z" fill="#103f91" /><rect y="5.5" width="16" height="16" rx="1.3" fill="#185abd" /><text x="8" y="18" fill="#fff" fontFamily="Open Sans" fontWeight="700" fontSize="11.5" textAnchor="middle">W</text></svg></AppCell>
        <AppCell><svg width="23" height="30" viewBox="0 0 23 30"><path d="M12.500 0c-1 1.500-1.300 3-1 4.500C18 4.700 23 9 23 15c0 7-6 12.500-13.500 15 1-1.500 1.400-3 1.200-4.500C5 25.300 0 21 0 15 0 8 5.500 2.500 12.500 0z" fill="#eb6a32" /><circle cx="11.5" cy="15" r="4.3" fill="#381c30" /></svg></AppCell>
        <AppCell><svg width="30" height="30" viewBox="0 0 30 30"><circle cx="15" cy="15" r="15" fill="#1470f0" /><path d="M4.500 18.500C2.500 9 9 4 15.500 4.500 21.500 5 26 10 25.500 16c-.5 6-5 9.500-10 9.500-4.500 0-8-3.500-8-7.500 0-5 3.500-8 7.500-8s6.500 3 6.500 6.500-2.500 5.500-5 5.500-4-1.500-4-3.500" fill="none" stroke="#fff" strokeWidth="2.3" /><circle cx="15.5" cy="16.500" r="2" fill="#fff" /></svg></AppCell>
        <AppCell><svg width="29" height="29" viewBox="0 0 29 29"><path d="M2 0h19l8 14.500L21 29H2q-2 0-2-2V2q0-2 2-2z" fill="#e8e8e8" /><path d="M0 15h29l-8 14H2q-2 0-2-2z" fill="#c8c8c8" opacity=".6" /><text x="11" y="23" fill="#e2231a" fontFamily="Liberation Sans" fontSize="24" textAnchor="middle">Я</text></svg></AppCell>
        <AppCell><svg width="30" height="30" viewBox="0 0 30 30"><circle cx="15" cy="15" r="15" fill="#f2f2f2" /><path d="M7 7.500l8 9 8-9M15 16v10" fill="none" stroke="#d11920" strokeWidth="3.2" /></svg></AppCell>
        <AppCell><svg width="29" height="29" viewBox="0 0 29 29"><path d="M0 0h21v24H3l-3-3z" fill="#3f9c35" /><text x="10.5" y="17.5" fill="#fff" fontFamily="Liberation Sans" fontSize="17" textAnchor="middle">Qt</text><path d="M29 14c-9 3-14 8-13 14 7 1 12-5 13-14z" fill="#dcdcdc" /><path d="M15 29L27 16" stroke="#777" /></svg></AppCell>
        <AppCell><svg width="28" height="28" viewBox="0 0 28 28"><rect width="28" height="28" rx="7.5" fill="#4687fb" /><path d="M5 9h10q3 0 3 3v7H8q-3 0-3-3zM19 12.500l4.500-3v9l-4.500-3z" fill="#fff" /></svg></AppCell>
        <AppCell><svg width="29" height="29" viewBox="0 0 29 29"><path d="M20.500 1L28 4v21l-7.500 3L9 18l-5.500 4L1 20.500v-12L3.500 7 9 11z" fill="#11274f" stroke="#fff" strokeWidth="1.5" /><path d="M20.500 9.500v10L14 14.500zM4 11v7l3.500-3.500z" fill="#381c24" stroke="#fff" strokeWidth="1.3" /></svg></AppCell>
        <AppCell><svg width="28" height="29" viewBox="0 0 28 29"><path d="M1 28l2-7.500A13 13 0 1 1 8 25.500z" fill="#2fc456" stroke="#fff" strokeWidth="1.8" /><path d="M9.500 7.500c-3 2-2 6 1.500 9.500s8 5 10 2c.6-1 .5-2-.3-2.500l-2.600-1.300c-.8-.2-1.400 1.600-2.200 1.500-2-.6-4-2.700-4.500-4.500 0-.7 1.500-1.200 1.300-2l-1.200-2.500c-.5-.7-1.300-.7-2-.2z" fill="#fff" /></svg></AppCell>
        <Tray>
          <TrayIcon $w={30}><svg width="16" height="10" viewBox="0 0 16 10" fill="none" stroke="#fff" strokeWidth="1.4"><path d="M1 9l7-7.500L15 9" /></svg></TrayIcon>
          <TrayIcon $w={30}><svg width="21" height="16" viewBox="0 0 21 16"><path d="M5 14a4.500 4.500 0 0 1 0-8.500C6 2 9 1 11.500 2c2 .5 3 2 3.500 4 3 0 5 1.500 5 4s-2 4-4 4z" fill="#9a8a8b" /><path d="M3 1l15 14.500" stroke="#fff" strokeWidth="1.4" /></svg></TrayIcon>
          <TrayIcon $w={30}><svg width="16" height="16" viewBox="0 0 16 16" fill="none" stroke="#fff" strokeWidth="1.2"><path d="M1 16C1 7.500 7.500 1 16 1" stroke="#b7acac" /><path d="M4.500 16C4.500 9.500 9.500 4.500 16 4.500M8 16c0-4.500 3.500-8 8-8M11.500 16c0-2.500 2-4.500 4.500-4.500" /><circle cx="15" cy="15" r="1" fill="#fff" stroke="none" /></svg></TrayIcon>
          <TrayIcon $w={29}><svg width="21" height="16" viewBox="0 0 21 16" fill="none" stroke="#fff" strokeWidth="1.3"><path d="M5 6v7.500h13.500V4H7M19.500 7v3.500" /><rect x="7" y="6" width="8" height="5.5" fill="#fff" stroke="none" /><path d="M1 2.500h4.500V5a2 2 0 0 1-4.500 0zM2 0v2.500M4.500 0v2.500M3.200 7v4" /></svg></TrayIcon>
          <TrayIcon $w={30}><svg width="20" height="16" viewBox="0 0 20 16" fill="none" stroke="#fff" strokeWidth="1.3"><path d="M1 5.500h2.500L7 2v12l-3.500-3.500H1z" /><path d="M9.500 6q1.500 2 0 4.500" /><path d="M12.500 4q3 4 0 8.500M15.500 2q5 6 0 12.500" stroke="#8c7c7c" /></svg></TrayIcon>
          <Lang>РУС</Lang>
          <Clock>10:26<br />12.01.2021</Clock>
          <Notes><svg width="20" height="21" viewBox="0 0 20 21"><path d="M0 0h20v16H8l-4 5v-5H0z" fill="#fff" /><path d="M4 4.500h12M4 8h12M4 11.500h8" stroke="#3c1b1d" strokeWidth="1.3" /></svg><Badge>8</Badge></Notes>
        </Tray>
      </Taskbar>
    </Screen>
  );
}
